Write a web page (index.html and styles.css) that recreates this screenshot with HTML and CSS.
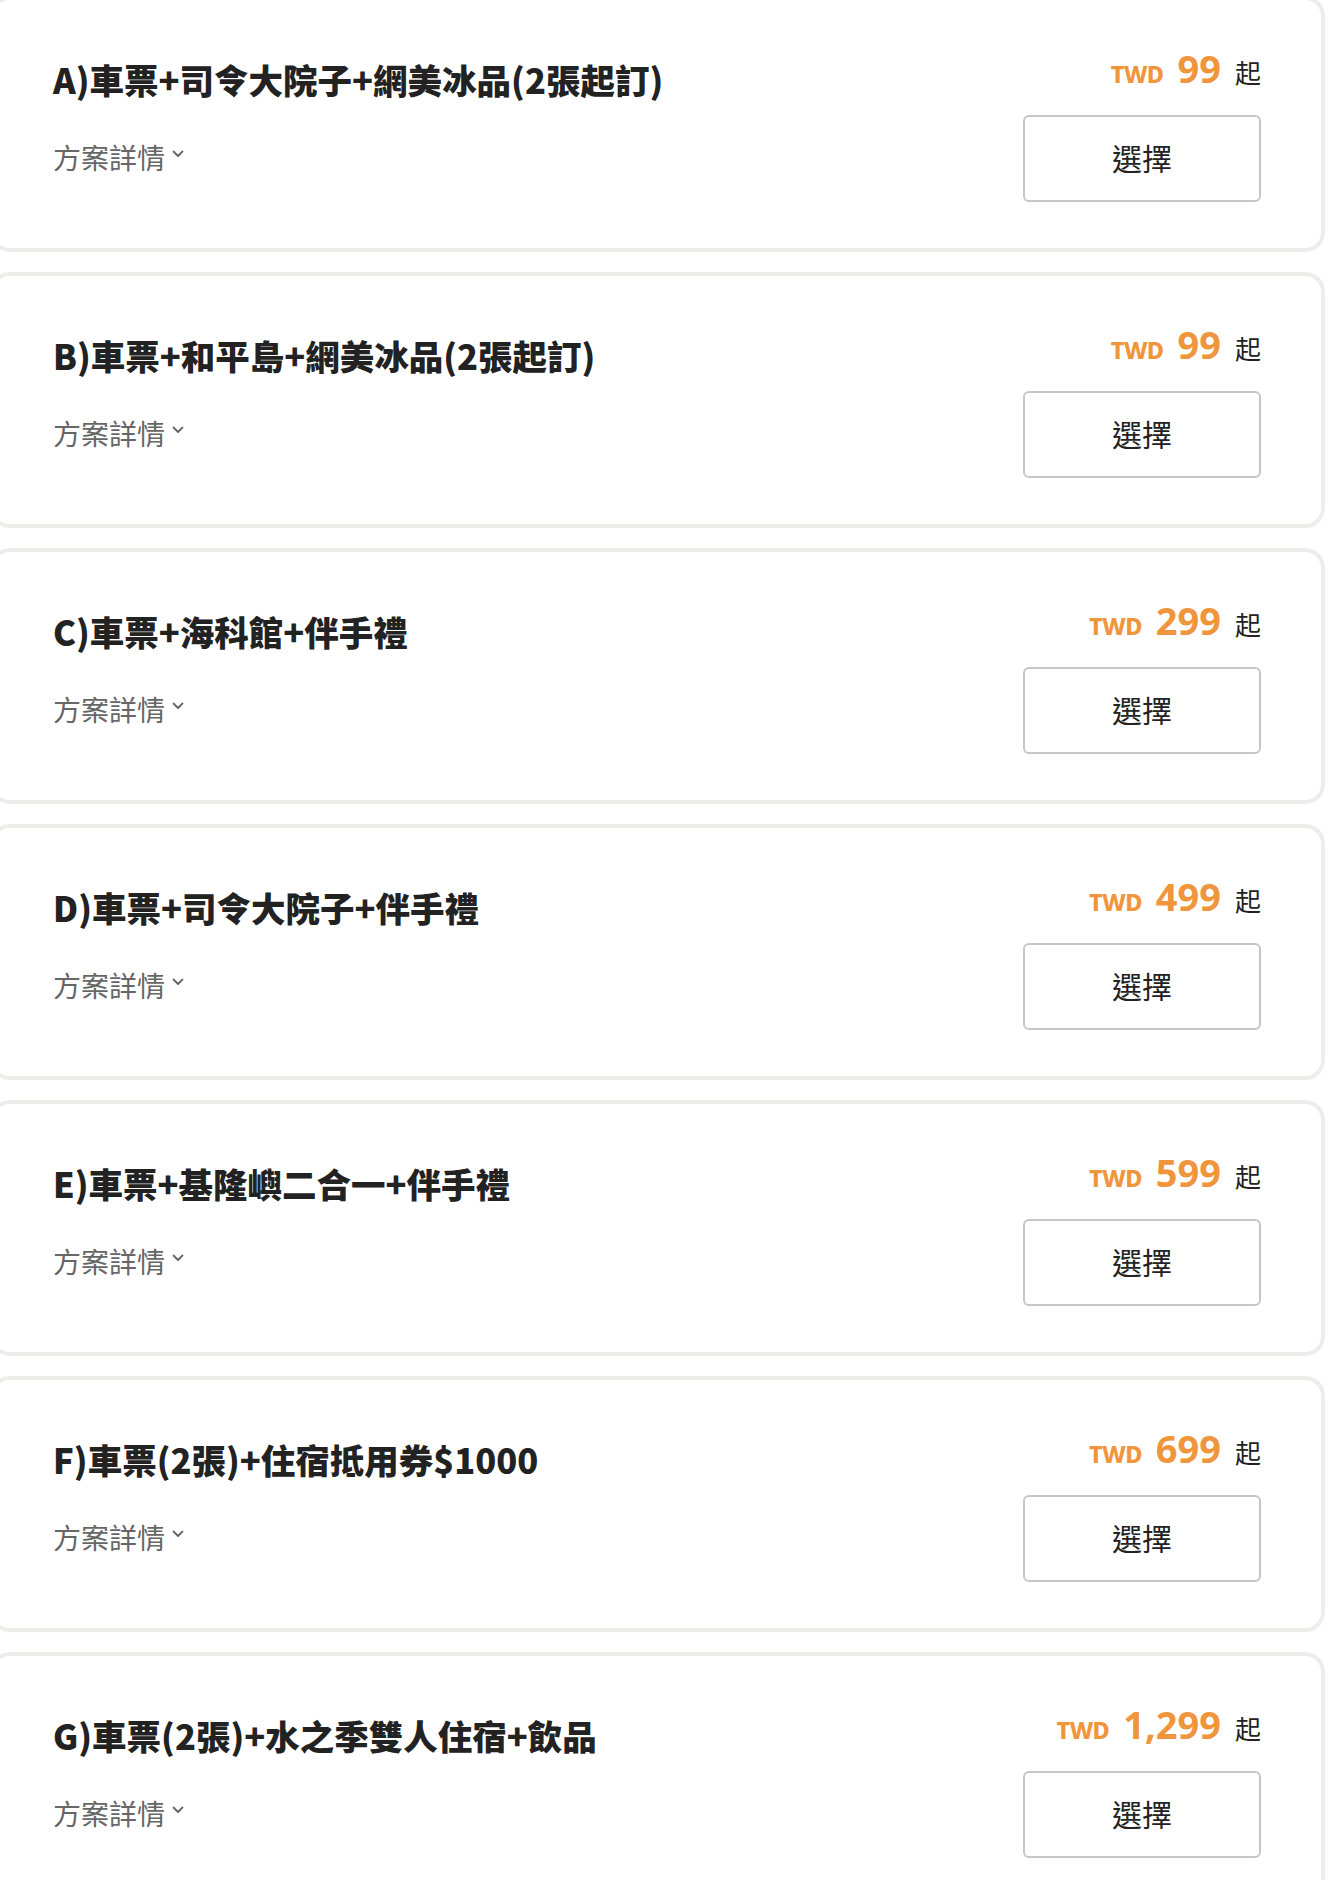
FILE: index.html
```html
<!DOCTYPE html>
<html lang="zh-Hant">
<head>
<meta charset="utf-8">
<title>方案列表</title>
<link rel="stylesheet" href="styles.css">
</head>
<body>
<div class="list">
  <div class="card">
    <div class="info">
      <div class="title">A)車票+司令大院子+網美冰品(2張起訂)</div>
      <div class="details">方案詳情<svg class="chev" width="12" height="8" viewBox="0 0 12 8"><polyline points="1.5,1.5 6,6 10.5,1.5" fill="none" stroke="#666" stroke-width="1.8" stroke-linecap="round" stroke-linejoin="round"/></svg></div>
    </div>
    <div class="action">
      <div class="price"><span class="cur">TWD</span><span class="amt">99</span><span class="from">起</span></div>
      <button class="select">選擇</button>
    </div>
  </div>
  <div class="card">
    <div class="info">
      <div class="title">B)車票+和平島+網美冰品(2張起訂)</div>
      <div class="details">方案詳情<svg class="chev" width="12" height="8" viewBox="0 0 12 8"><polyline points="1.5,1.5 6,6 10.5,1.5" fill="none" stroke="#666" stroke-width="1.8" stroke-linecap="round" stroke-linejoin="round"/></svg></div>
    </div>
    <div class="action">
      <div class="price"><span class="cur">TWD</span><span class="amt">99</span><span class="from">起</span></div>
      <button class="select">選擇</button>
    </div>
  </div>
  <div class="card">
    <div class="info">
      <div class="title">C)車票+海科館+伴手禮</div>
      <div class="details">方案詳情<svg class="chev" width="12" height="8" viewBox="0 0 12 8"><polyline points="1.5,1.5 6,6 10.5,1.5" fill="none" stroke="#666" stroke-width="1.8" stroke-linecap="round" stroke-linejoin="round"/></svg></div>
    </div>
    <div class="action">
      <div class="price"><span class="cur">TWD</span><span class="amt">299</span><span class="from">起</span></div>
      <button class="select">選擇</button>
    </div>
  </div>
  <div class="card">
    <div class="info">
      <div class="title">D)車票+司令大院子+伴手禮</div>
      <div class="details">方案詳情<svg class="chev" width="12" height="8" viewBox="0 0 12 8"><polyline points="1.5,1.5 6,6 10.5,1.5" fill="none" stroke="#666" stroke-width="1.8" stroke-linecap="round" stroke-linejoin="round"/></svg></div>
    </div>
    <div class="action">
      <div class="price"><span class="cur">TWD</span><span class="amt">499</span><span class="from">起</span></div>
      <button class="select">選擇</button>
    </div>
  </div>
  <div class="card">
    <div class="info">
      <div class="title">E)車票+基隆嶼二合一+伴手禮</div>
      <div class="details">方案詳情<svg class="chev" width="12" height="8" viewBox="0 0 12 8"><polyline points="1.5,1.5 6,6 10.5,1.5" fill="none" stroke="#666" stroke-width="1.8" stroke-linecap="round" stroke-linejoin="round"/></svg></div>
    </div>
    <div class="action">
      <div class="price"><span class="cur">TWD</span><span class="amt">599</span><span class="from">起</span></div>
      <button class="select">選擇</button>
    </div>
  </div>
  <div class="card">
    <div class="info">
      <div class="title">F)車票(2張)+住宿抵用券$1000</div>
      <div class="details">方案詳情<svg class="chev" width="12" height="8" viewBox="0 0 12 8"><polyline points="1.5,1.5 6,6 10.5,1.5" fill="none" stroke="#666" stroke-width="1.8" stroke-linecap="round" stroke-linejoin="round"/></svg></div>
    </div>
    <div class="action">
      <div class="price"><span class="cur">TWD</span><span class="amt">699</span><span class="from">起</span></div>
      <button class="select">選擇</button>
    </div>
  </div>
  <div class="card">
    <div class="info">
      <div class="title">G)車票(2張)+水之季雙人住宿+飲品</div>
      <div class="details">方案詳情<svg class="chev" width="12" height="8" viewBox="0 0 12 8"><polyline points="1.5,1.5 6,6 10.5,1.5" fill="none" stroke="#666" stroke-width="1.8" stroke-linecap="round" stroke-linejoin="round"/></svg></div>
    </div>
    <div class="action">
      <div class="price"><span class="cur">TWD</span><span class="amt">1,299</span><span class="from">起</span></div>
      <button class="select">選擇</button>
    </div>
  </div>
</div>
</body>
</html>
```

FILE: styles.css
```css
html, body {
  margin: 0;
  padding: 0;
  background: #ffffff;
}

body {
  font-family: "Noto Sans CJK TC", "Noto Sans", sans-serif;
  color: #222222;
  overflow: hidden;
}

.list {
  display: flex;
  flex-direction: column;
  gap: 20px;
  margin-top: -4px;
  margin-left: -10px;
  width: 1335px;
}

.card {
  box-sizing: border-box;
  height: 256px;
  border: 4px solid #edeeea;
  border-radius: 20px;
  background: #ffffff;
  display: flex;
  justify-content: space-between;
  padding: 44px 60px 0 59px;
}

.info {
  display: flex;
  flex-direction: column;
  padding-top: 11px;
}

.title {
  font-family: "Noto Sans CJK TC", sans-serif;
  font-weight: 900;
  font-size: 34.5px;
  line-height: 48px;
  color: #222222;
  letter-spacing: 0;
}

.details {
  margin-top: 34px;
  font-size: 28px;
  line-height: 40px;
  color: #666666;
  display: flex;
  align-items: center;
}

.chev {
  margin-left: 7px;
  margin-top: -6px;
}

.action {
  display: flex;
  flex-direction: column;
  align-items: flex-end;
}

.price {
  height: 48px;
  line-height: 48px;
  white-space: nowrap;
  display: flex;
  align-items: baseline;
}

.cur {
  font-family: "Noto Sans", sans-serif;
  font-weight: 800;
  font-size: 23.5px;
  color: #f0953b;
  letter-spacing: -0.6px;
}

.amt {
  font-family: "Noto Sans", sans-serif;
  font-weight: 700;
  font-size: 38px;
  color: #f0953b;
  margin-left: 14px;
}

.from {
  font-family: "Noto Sans CJK TC", sans-serif;
  font-size: 26px;
  color: #222222;
  margin-left: 14px;
}

.select {
  margin-top: 23px;
  box-sizing: border-box;
  width: 238px;
  height: 87px;
  border: 2px solid #c6c6c6;
  border-radius: 6px;
  background: #ffffff;
  font-family: "Noto Sans CJK TC", sans-serif;
  font-size: 30px;
  line-height: 40px;
  color: #222222;
  padding: 0 0 4px 0;
  cursor: pointer;
}
```
